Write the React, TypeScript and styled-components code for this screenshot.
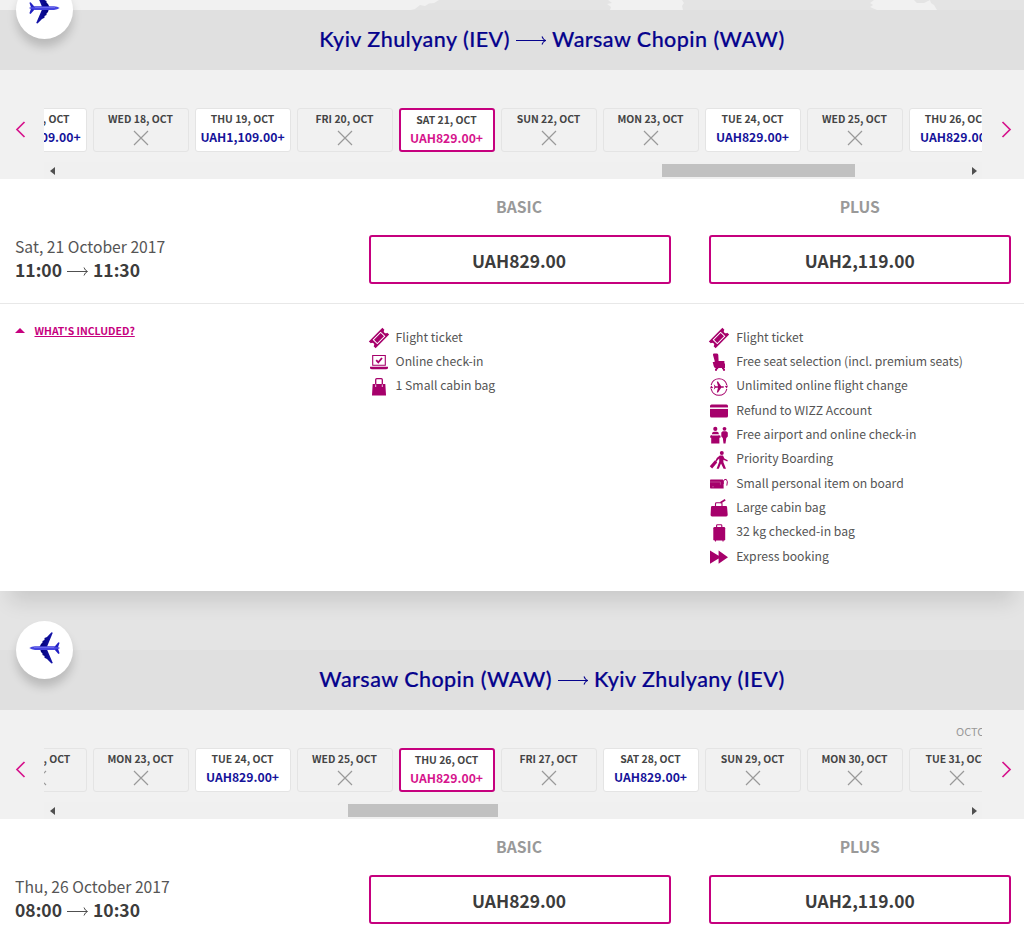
import * as React from 'react';
import styled, { createGlobalStyle, css } from 'styled-components';

const pink = '#c6007e';
const brightPink = '#d6148c';
const berry = '#a6006b';
const navy = '#06038d';

const GlobalStyle = createGlobalStyle`
    * { box-sizing: border-box; }
    body {
        margin: 0;
        background: #f1f1f1;
        color: #3c3c3c;
        font-family: 'Noto Sans CJK SC', 'Noto Sans', sans-serif;
    }
`

const Page = styled.main`
    width: 1024px;
    height: 938px;
    overflow: hidden;
`

const Flight = styled.section`
    display: flex;
    flex-direction: column;
`

const Strip = styled.div<{ $height: number }>`
    height: ${p => p.$height}px;
    background: #e4e4e4;
    svg { display: block; }
`

const TitleBar = styled.header`
    position: relative;
    display: flex;
    align-items: center;
    justify-content: center;
    height: 60px;
    padding: 0 0 2px 80px;
    background: #e0e0e0;
`

const Title = styled.h2`
    display: flex;
    align-items: center;
    gap: 6px;
    margin: 0;
    color: ${navy};
    font: 500 21.5px/30px Lato, sans-serif;
    letter-spacing: 0.45px;
    -webkit-text-stroke: 0.2px ${navy};
    white-space: nowrap;
    svg { margin-top: 2px; }
`

const Badge = styled.div`
    position: absolute;
    z-index: 3;
    left: 16px;
    top: -29px;
    display: flex;
    align-items: center;
    justify-content: center;
    width: 57px;
    height: 58px;
    padding: 0 1px 4px 0;
    border-radius: 50%;
    background: #fff;
    box-shadow: 0 8px 10px rgba(0, 0, 0, 0.17);
`

const Picker = styled.div`
    display: flex;
    height: 109px;
    background: #f1f1f1;
`

const PickerArrow = styled.button<{ $side: 'left' | 'right' }>`
    flex: none;
    display: flex;
    align-items: flex-start;
    width: ${p => (p.$side === 'left' ? 44 : 42)}px;
    padding: 51px 0 0 ${p => (p.$side === 'left' ? 15 : 18.5)}px;
    border: 0;
    background: none;
`

const Scroller = styled.div`
    flex: 1;
    min-width: 0;
    overflow: hidden;
`

const Month = styled.div`
    height: 38px;
    padding: 11px 0 0 912px;
    color: #999;
    font-size: 11px;
    line-height: 20px;
`

const Days = styled.div`
    display: flex;
    gap: 6px;
    height: 54px;
    margin-left: -53px;
`

const Day = styled.div<{ $state: string }>`
    flex: none;
    display: flex;
    flex-direction: column;
    align-items: center;
    width: 96px;
    height: 43.5px;
    padding: 1px 1px 0 0;
    border: 1px solid #e4e4e4;
    border-radius: 3px;
    background: ${p => (p.$state === 'none' ? 'transparent' : '#fff')};
    color: #16139a;
    svg { margin-top: 2px; }
    ${p => p.$state === 'selected' && css`
        border: 2px solid ${pink};
        color: ${brightPink};
    `}
`

const DayName = styled.span`
    color: #444;
    font-size: 10.4px;
    font-weight: 700;
    line-height: 18px;
    white-space: nowrap;
`

const DayPrice = styled.span`
    font-size: 12.2px;
    font-weight: 700;
    line-height: 18px;
    white-space: nowrap;
`

const Scrollbar = styled.div`
    display: flex;
    align-items: center;
    height: 17px;
    padding: 0 5px 0 6px;
    background: #f0f0f0;
`

const Track = styled.div`
    flex: 1;
    margin: 0 7px 0 6px;
`

const Thumb = styled.div`
    height: 13px;
    background: #c1c1c1;
`

const Panel = styled.div<{ $open: boolean }>`
    position: relative;
    z-index: 2;
    height: ${p => (p.$open ? 412 : 122)}px;
    background: #fff;
    box-shadow: 0 20px 20px -10px rgba(0, 0, 0, 0.12);
`

const Row = styled.div`
    display: grid;
    grid-template-columns: 368.6px 302px 302px;
    & > :last-child { margin-left: 38.7px; margin-right: -38.7px; }
`

const FareRow = styled(Row)`
    height: 125px;
    border-bottom: 1px solid #e8e8e8;
`

const Times = styled.div`
    padding: 56px 0 0 15px;
    font-size: 15.7px;
    line-height: 24px;
`

const FlightDate = styled.div`
    color: #555;
`

const Hours = styled.div`
    display: flex;
    align-items: center;
    gap: 5px;
    height: 22px;
    font-size: 17.5px;
    font-weight: 700;
    svg { margin-top: 2px; }
`

const Fare = styled.div`
    text-align: center;
`

const FareName = styled.div`
    height: 56px;
    padding: 16px 1px 0 0;
    color: #999;
    font-size: 15.7px;
    font-weight: 700;
    line-height: 24px;
`

const FareButton = styled.button`
    width: 100%;
    height: 48.5px;
    padding: 4px 1px 0 0;
    border: 2px solid ${pink};
    border-radius: 3px;
    background: #fff;
    color: #3c3c3c;
    font-family: inherit;
    font-size: 17.4px;
    font-weight: 700;
    line-height: 24px;
`

const IncludedRow = styled(Row)`
    padding-top: 22px;
`

const Included = styled.div`
    display: flex;
    align-items: center;
    gap: 9.5px;
    height: 9px;
    padding-left: 15px;
    color: ${pink};
    font-size: 10.45px;
    font-weight: 700;
    text-decoration: underline;
`

const Perks = styled.ul`
    margin: 0;
    padding: 0;
    list-style: none;
`

const Perk = styled.li`
    display: flex;
    align-items: center;
    gap: 8px;
    height: 24.3px;
    padding-left: 1px;
    color: #555;
    font-size: 12.2px;
    line-height: 18px;
    white-space: nowrap;
    svg { flex: none; }
`

const PerkLabel = styled.span`
    padding-bottom: 2.5px;
`

const Arrow = ({ width, stroke = 1 }: { width: number, stroke?: number }) => (
    <svg width={width} height="10" viewBox={`0 0 ${width} 10`} fill="none" stroke="currentColor" strokeWidth={stroke}>
        <path d={`M0 5.5H${width - 1}M${width - 4} 1.5Q${width - 3} 4.5 ${width - 0.5} 5.5Q${width - 3} 6.5 ${width - 4} 9.5`} />
    </svg>
)

const Chevron = ({ left }: { left?: boolean }) => (
    <svg width="11" height="17" viewBox="0 0 11 17" fill="none" stroke={brightPink} strokeWidth="1.7">
        <path d={left ? 'M9.5 1L2 8.5L9.5 16' : 'M1.5 1L9 8.5L1.5 16'} />
    </svg>
)

const Cross = () => (
    <svg width="16" height="16" viewBox="0 0 16 16" stroke="#999" strokeWidth="1.2">
        <path d="M1 1L15 15M15 1L1 15" />
    </svg>
)

const Plane = ({ flip }: { flip?: boolean }) => (
    <svg width="31" height="32" viewBox="0 0 31 32" transform={flip ? 'scale(-1 1)' : undefined}>
        <defs>
            <linearGradient id="wing" x1="0" x2="1">
                <stop offset="0.1" stopColor="#02027c" />
                <stop offset="1" stopColor="#2423cc" />
            </linearGradient>
        </defs>
        <path fill="url(#wing)" d="M10.5 15L12 12L13.5 10.5V9L15.5 8V6L18 5L22.5 .3L23.8 .8L18 14.8L25.5 14.8L29.4 10.2L30.6 10.8L28.8 16L30.6 21.2L29.4 21.9L25.5 17.4L18 17.4L23.8 31L22.5 31.6L18 27L15.5 25.8V24L13.5 23V21.5L12 20Z" />
        <path fill="#4544df" d="M.3 16Q2.5 14.2 6 14.2H25L30.5 15.6V16.5L25 17.9H6Q2.5 17.8 .3 16Z" />
        <path stroke="#7776f2" strokeWidth=".8" d="M5 15.4H25" />
    </svg>
)

// every glyph is drawn on an 18x18 grid
const glyphs: Record<string, React.ReactNode> = {
    ticket: (
        <g transform="rotate(-45 9 9)">
            <path d="M-.6 4.2H18.6V7A2 2 0 0 0 18.6 11V13.8H-.6V11A2 2 0 0 0 -.6 7Z" />
            <path d="M3.8 6.2H14.2V11.8H3.8Z" fill="none" stroke="#fff" strokeWidth="1" />
        </g>
    ),
    laptop: (
        <>
            <path d="M2.7 2.5H15.3V12.2H2.7Z" fill="none" stroke={berry} strokeWidth="1.1" />
            <path d="M6.2 7.2L8.3 9.4L12 5" fill="none" stroke={berry} strokeWidth="1.8" />
            <path d="M0 13.8H18V15.2Q17.5 16.3 16 16.3H2Q.5 16.3 0 15.2Z" />
        </>
    ),
    bag: (
        <>
            <path d="M2.7 6H15.3L16 17.6H2Z" />
            <path d="M5.7 9V1.7Q5.7 .7 6.7 .7H11.3Q12.3 .7 12.3 1.7V9" fill="none" stroke={berry} strokeWidth="1.3" />
            <path d="M5.7 6.5V9M12.3 6.5V9" stroke="#fff" strokeWidth=".8" />
        </>
    ),
    seat: (
        <>
            <path d="M3.8 .5H7Q8.3 .5 8.3 2L8.6 8H4.7L3 2Q2.8 .5 3.8 .5Z" />
            <path d="M4.5 8H14.4V11H5Z" />
            <path d="M2.7 9H5L6 10.6H15V15H5.5Q4.2 15 3.7 13Z" />
            <path d="M6 15H8.2V16.2H7V17.8H5V16.2ZM12 15H14L15 16.2V17.8H13V16.2H12Z" />
        </>
    ),
    change: (
        <>
            <path d="M1.2 7A8 8 0 0 1 16.8 7M16.8 11A8 8 0 0 1 1.2 11" fill="none" stroke={berry} strokeWidth="1.1" />
            <path d="M0 10.6L1.2 7.6L3.2 10ZM18 7.4L16.8 10.4L14.8 8Z" />
            <path d="M3.8 6.2L5.6 8.2H8L6.8 3.4H8L11.2 8.2H13.5Q14.5 9 13.5 9.8H11.2L8 14.6H6.8L8 9.8H5.6L3.8 11.8L4.4 9Z" />
        </>
    ),
    card: (
        <>
            <path d="M1.5 2.5H16.5Q18 2.5 18 4V14Q18 15.6 16.5 15.6H1.5Q0 15.6 0 14V4Q0 2.5 1.5 2.5Z" />
            <path d="M0 6.2H18" stroke="#fff" strokeWidth="1.5" />
        </>
    ),
    desk: (
        <>
            <circle cx="5.3" cy="2.9" r="2.1" />
            <path d="M1.8 8.2Q2.2 5.8 4 5.8H7Q8.6 5.8 9 8.2Z" />
            <path d="M.2 9.8L2 9V9.4H8.6V9L10.5 9.8V11.8H9.4V17.6H1.2V11.8H.2Z" />
            <circle cx="14.5" cy="2.8" r="1.9" />
            <path d="M12.8 5.2H16.2L17.8 6.5V10.5L16.3 12L15.5 17.6H13.5L12.8 12L11.3 10.5V6.5Z" />
        </>
    ),
    walk: (
        <>
            <circle cx="11.8" cy="2" r="2" />
            <path d="M9.8 4.4H13L14.4 7.4L17.8 9.2L17.3 10.4L13.4 8.8V11.2L16 17.8H13.6L11 12.6L8.8 17.8H6.6L9.2 10.8V7.4L7.5 9.2L6.2 11L5.2 10.3L6.8 7Z" />
            <path d="M5 9.2L7.2 11.4L2.2 17.5L-.2 15.3Z" />
        </>
    ),
    purse: (
        <>
            <path d="M.7 4.6H12.8L13.6 6V13.6H.7Q0 13.6 0 12.6V5.6Q0 4.6 .7 4.6Z" />
            <path d="M0 7H10.4V9.8M2 11.8H4" fill="none" stroke="#cf85b3" strokeWidth=".5" />
            <path d="M13.2 9V6.8Q14 3.6 16.3 4.4Q18.2 6 16.8 10.6" fill="none" stroke={berry} strokeWidth="1" />
        </>
    ),
    cabin: (
        <>
            <path d="M2 7H16Q17 7 17.1 8.3L17.7 15.8Q17.7 17.5 16.2 17.5H2Q.5 17.5 .6 15.8L1 8.3Q1.1 7 2 7Z" />
            <path d="M5.5 7V4.7Q5.5 3.8 6.5 3.8H11.2Q12 3.8 12 4.7V7" fill="none" stroke={berry} strokeWidth="1.1" />
            <path d="M10.5 3.8L15.2 .8" stroke={berry} strokeWidth="1.8" />
        </>
    ),
    suitcase: (
        <>
            <path d="M4.6 3H14Q15.2 3 15.2 4.3V15.2Q15.2 16.5 14 16.5H4.6Q3.3 16.5 3.3 15.2V4.3Q3.3 3 4.6 3Z" />
            <path d="M6.6 3.4V1.5Q6.6 .7 7.4 .7H11Q11.8 .7 11.8 1.5V3.4M5.5 16V17.6M13 16V17.6" fill="none" stroke={berry} strokeWidth="1.1" />
        </>
    ),
    express: <path d="M0 2.6L8.6 7.8V2.6L18 9.2L8.6 15.8V10.6L0 15.8Z" />,
}

const Glyph = ({ name }: { name: string }) => (
    <svg width="18" height="18" viewBox="0 0 18 18" overflow="visible" fill={berry}>{glyphs[name]}</svg>
)

const basicPerks = [
    ['ticket', 'Flight ticket'],
    ['laptop', 'Online check-in'],
    ['bag', '1 Small cabin bag'],
]

const plusPerks = [
    ['ticket', 'Flight ticket'],
    ['seat', 'Free seat selection (incl. premium seats)'],
    ['change', 'Unlimited online flight change'],
    ['card', 'Refund to WIZZ Account'],
    ['desk', 'Free airport and online check-in'],
    ['walk', 'Priority Boarding'],
    ['purse', 'Small personal item on board'],
    ['cabin', 'Large cabin bag'],
    ['suitcase', '32 kg checked-in bag'],
    ['express', 'Express booking'],
]

const outboundDays = [
    ['TUE 17', 'UAH1,109.00+'],
    ['WED 18'],
    ['THU 19', 'UAH1,109.00+'],
    ['FRI 20'],
    ['SAT 21', 'UAH829.00+'],
    ['SUN 22'],
    ['MON 23'],
    ['TUE 24', 'UAH829.00+'],
    ['WED 25'],
    ['THU 26', 'UAH829.00+'],
]

const returnDays = [
    ['SUN 22'],
    ['MON 23'],
    ['TUE 24', 'UAH829.00+'],
    ['WED 25'],
    ['THU 26', 'UAH829.00+'],
    ['FRI 27'],
    ['SAT 28', 'UAH829.00+'],
    ['SUN 29'],
    ['MON 30'],
    ['TUE 31'],
]

const PerkList = ({ items }: { items: string[][] }) => (
    <Perks>
        {items.map(([icon, label]) => (
            <Perk key={label}><Glyph name={icon} /><PerkLabel>{label}</PerkLabel></Perk>
        ))}
    </Perks>
)

const MapStrip = () => (
    <svg width="1024" height="10" viewBox="0 0 1024 10" fill="#f1f1f1">
        <path d="M0 0H439L434 3L429 3.5L425 6L420 5L415 9L411 10H0Z" />
        <path d="M608 0L612 3L607 4L611 7L610 10H683L682 6L684 3L682 0Z" />
        <path d="M874 0L870 3L873 5L870 7L877 10H937L934 5L931 3L930 0L924 3L917 3L914 0Z" />
    </svg>
)

interface LegProps {
    from: string;
    to: string;
    days: string[][];
    thumb: { left: number, width: number };
    date: string;
    departs: string;
    arrives: string;
    month?: string;
    inbound?: boolean;
    open?: boolean;
}

const Leg = (props: LegProps) => (
    <Flight>
        <Strip $height={props.inbound ? 59 : 10}>{!props.inbound && <MapStrip />}</Strip>
        <TitleBar>
            <Badge><Plane flip={!props.inbound} /></Badge>
            <Title>{props.from}<Arrow width={30} stroke={1.1} />{props.to}</Title>
        </TitleBar>
        <Picker>
            <PickerArrow $side="left"><Chevron left /></PickerArrow>
            <Scroller>
                <Month>{props.month}</Month>
                <Days>
                    {props.days.map(([day, price], i) => (
                        <Day key={day} $state={i === 4 ? 'selected' : price ? 'price' : 'none'}>
                            <DayName>{day}, OCT</DayName>
                            {price ? <DayPrice>{price}</DayPrice> : <Cross />}
                        </Day>
                    ))}
                </Days>
                <Scrollbar>
                    <svg width="5" height="8" viewBox="0 0 5 8" fill="#505050"><path d="M5 0V8L0 4Z" /></svg>
                    <Track>
                        <Thumb style={{ marginLeft: props.thumb.left, width: props.thumb.width }} />
                    </Track>
                    <svg width="5" height="8" viewBox="0 0 5 8" fill="#505050"><path d="M0 0V8L5 4Z" /></svg>
                </Scrollbar>
            </Scroller>
            <PickerArrow $side="right"><Chevron /></PickerArrow>
        </Picker>
        <Panel $open={!!props.open}>
            <FareRow>
                <Times>
                    <FlightDate>{props.date}</FlightDate>
                    <Hours>{props.departs}<Arrow width={21} stroke={0.9} />{props.arrives}</Hours>
                </Times>
                <Fare>
                    <FareName>BASIC</FareName>
                    <FareButton>UAH829.00</FareButton>
                </Fare>
                <Fare>
                    <FareName>PLUS</FareName>
                    <FareButton>UAH2,119.00</FareButton>
                </Fare>
            </FareRow>
            {props.open && (
                <IncludedRow>
                    <Included>
                        <svg width="10" height="5" viewBox="0 0 10 5" fill={pink}><path d="M0 5L5 0L10 5Z" /></svg>
                        WHAT'S INCLUDED?
                    </Included>
                    <PerkList items={basicPerks} />
                    <PerkList items={plusPerks} />
                </IncludedRow>
            )}
        </Panel>
    </Flight>
)

const App = () => (
    <Page>
        <GlobalStyle />
        <Leg
            from="Kyiv Zhulyany (IEV)"
            to="Warsaw Chopin (WAW)"
            days={outboundDays}
            thumb={{ left: 601, width: 193 }}
            date="Sat, 21 October 2017"
            departs="11:00"
            arrives="11:30"
            open
        />
        <Leg
            from="Warsaw Chopin (WAW)"
            to="Kyiv Zhulyany (IEV)"
            days={returnDays}
            thumb={{ left: 286.5, width: 150.5 }}
            date="Thu, 26 October 2017"
            departs="08:00"
            arrives="10:30"
            month="OCTOBER"
            inbound
        />
    </Page>
)

export default App;
